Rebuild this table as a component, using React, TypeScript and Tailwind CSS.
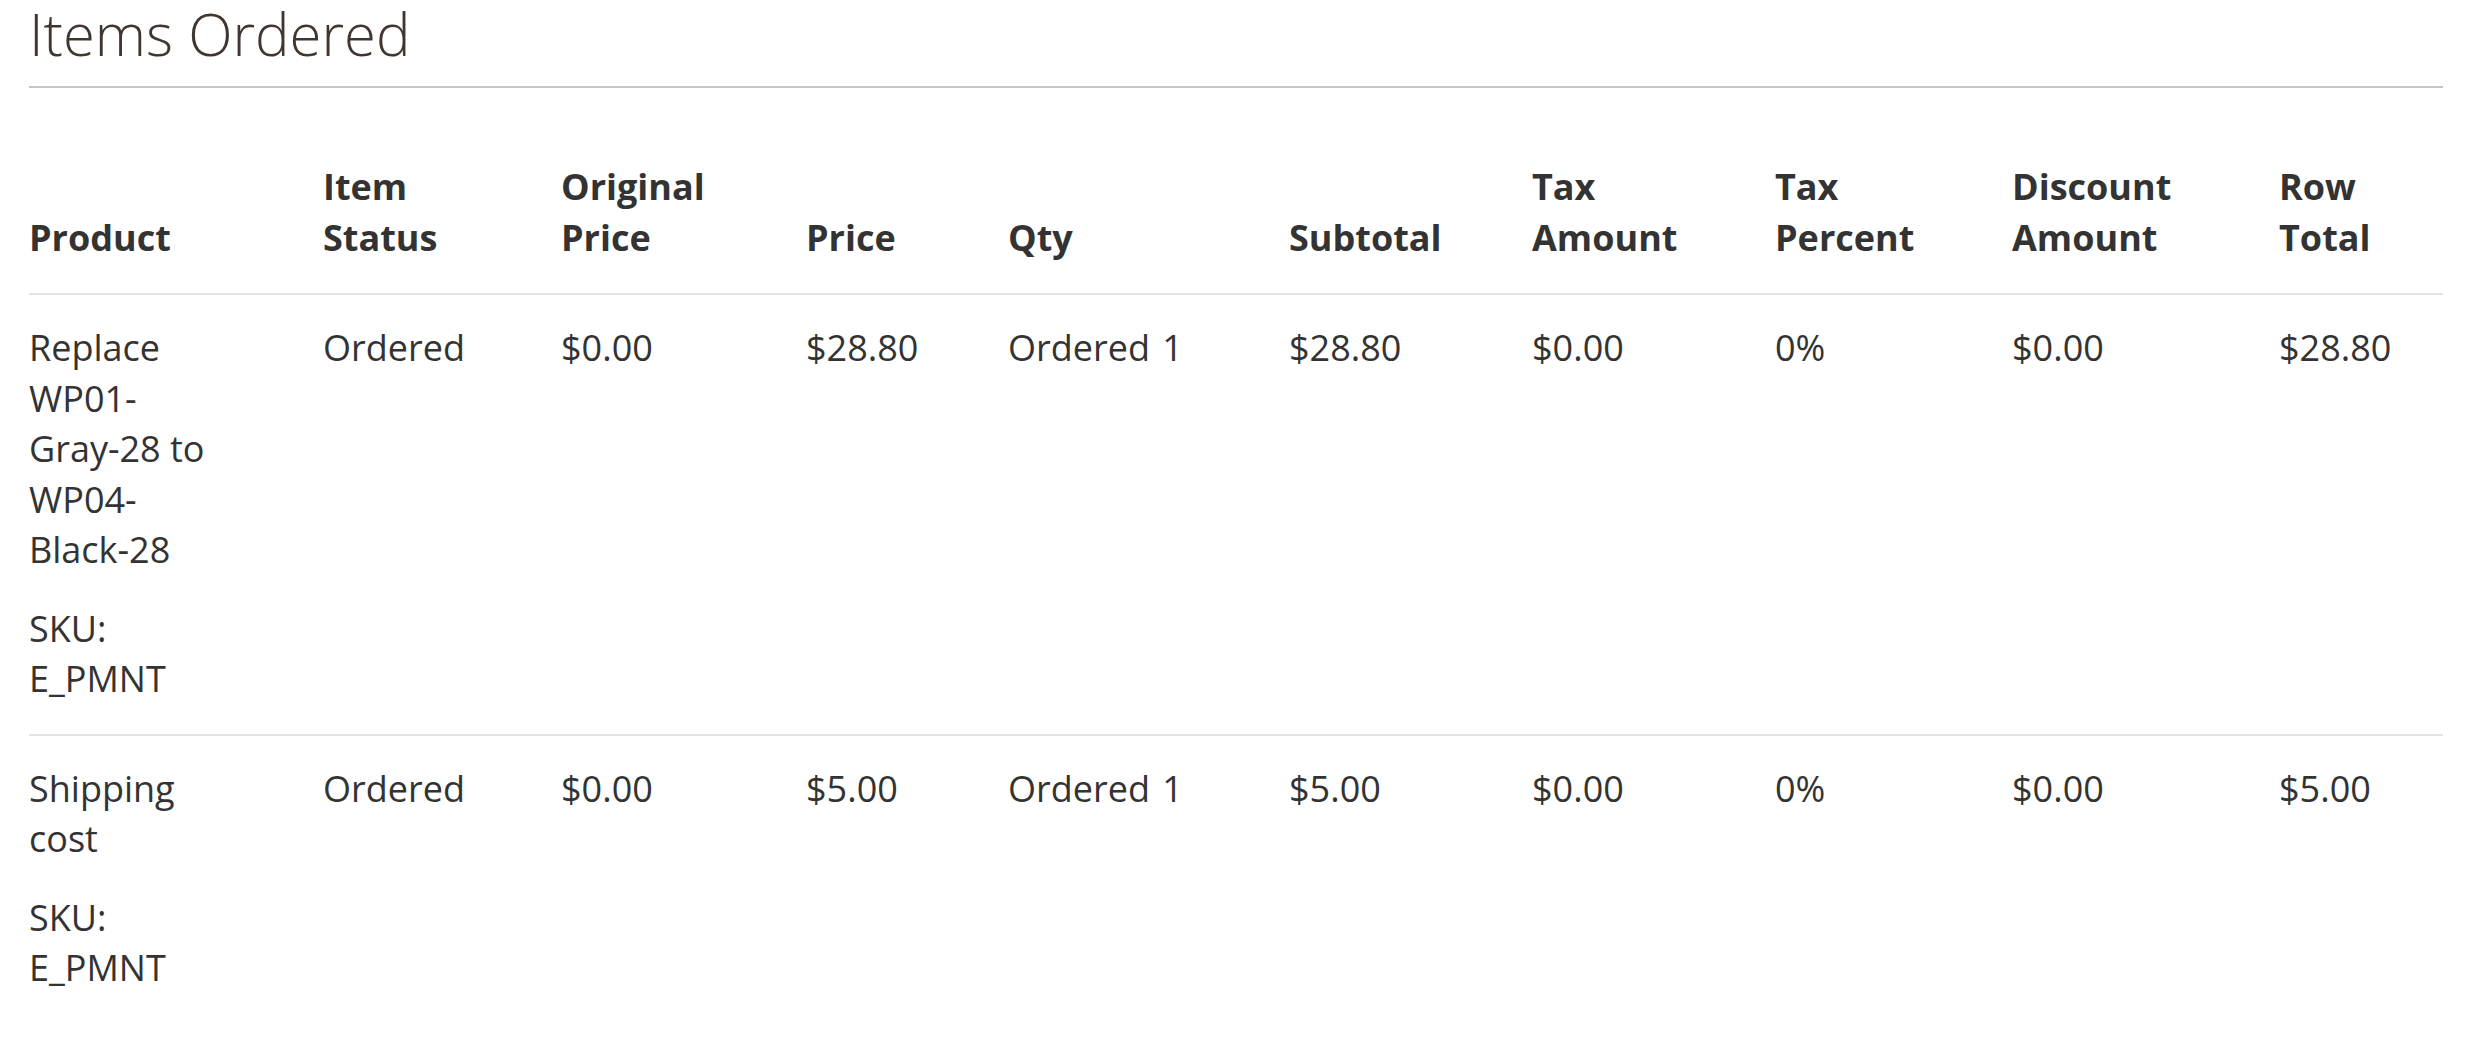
import React from "react";

type Row = {
  name: string;
  sku: string;
  status: string;
  original: string;
  price: string;
  qty: number;
  subtotal: string;
  tax: string;
  taxPercent: string;
  discount: string;
  total: string;
};

const rows: Row[] = [
  {
    name: "Replace WP01-Gray-28 to WP04-Black-28",
    sku: "E_PMNT",
    status: "Ordered",
    original: "$0.00",
    price: "$28.80",
    qty: 1,
    subtotal: "$28.80",
    tax: "$0.00",
    taxPercent: "0%",
    discount: "$0.00",
    total: "$28.80",
  },
  {
    name: "Shipping cost",
    sku: "E_PMNT",
    status: "Ordered",
    original: "$0.00",
    price: "$5.00",
    qty: 1,
    subtotal: "$5.00",
    tax: "$0.00",
    taxPercent: "0%",
    discount: "$0.00",
    total: "$5.00",
  },
];

const headers = [
  "Product",
  "Item Status",
  "Original Price",
  "Price",
  "Qty",
  "Subtotal",
  "Tax Amount",
  "Tax Percent",
  "Discount Amount",
  "Row Total",
];

// column widths measured from the left edge of each column's text
const widths = [294, 238, 245, 202, 281, 243, 243, 237, 267];

export default function App() {
  return (
    <div className="min-h-screen bg-white pl-[29px] pr-[48px] font-['Open_Sans',sans-serif] text-[#333]">
      {/* Block title */}
      <div className="border-b-2 border-[#c6c6c6] pt-[3px] pb-[21px]">
        <strong className="block text-[58px] leading-[62px] font-light text-[#41362f]">
          Items Ordered
        </strong>
      </div>

      <table className="mt-[46px] w-full table-fixed border-collapse text-[36px] leading-[50.5px]">
        <colgroup>
          {widths.map((w, i) => (
            <col key={i} style={{ width: w }} />
          ))}
          <col />
        </colgroup>
        <thead>
          <tr className="border-b-2 border-[#e3e3e3]">
            {headers.map((h) => (
              <th key={h} className="pt-[28px] pb-[30px] text-left align-bottom font-bold">
                <span className="block w-min">{h}</span>
              </th>
            ))}
          </tr>
        </thead>
        <tbody>
          {rows.map((r, i) => (
            <tr key={i} className={i > 0 ? "border-t-2 border-[#e3e3e3]" : ""}>
              <td className="pt-[28px] pb-[29px] align-top">
                <div className="w-[185px]">{r.name}</div>
                <div className="mt-[28px] w-[120px]">SKU: {r.sku}</div>
              </td>
              <td className="pt-[28px] pb-[29px] align-top">{r.status}</td>
              <td className="pt-[28px] pb-[29px] align-top">{r.original}</td>
              <td className="pt-[28px] pb-[29px] align-top">{r.price}</td>
              <td className="pt-[28px] pb-[29px] align-top whitespace-nowrap">
                <span>Ordered</span> <span className="ml-[3px]">{r.qty}</span>
              </td>
              <td className="pt-[28px] pb-[29px] align-top">{r.subtotal}</td>
              <td className="pt-[28px] pb-[29px] align-top">{r.tax}</td>
              <td className="pt-[28px] pb-[29px] align-top">{r.taxPercent}</td>
              <td className="pt-[28px] pb-[29px] align-top">{r.discount}</td>
              <td className="pt-[28px] pb-[29px] align-top">{r.total}</td>
            </tr>
          ))}
        </tbody>
      </table>
    </div>
  );
}
